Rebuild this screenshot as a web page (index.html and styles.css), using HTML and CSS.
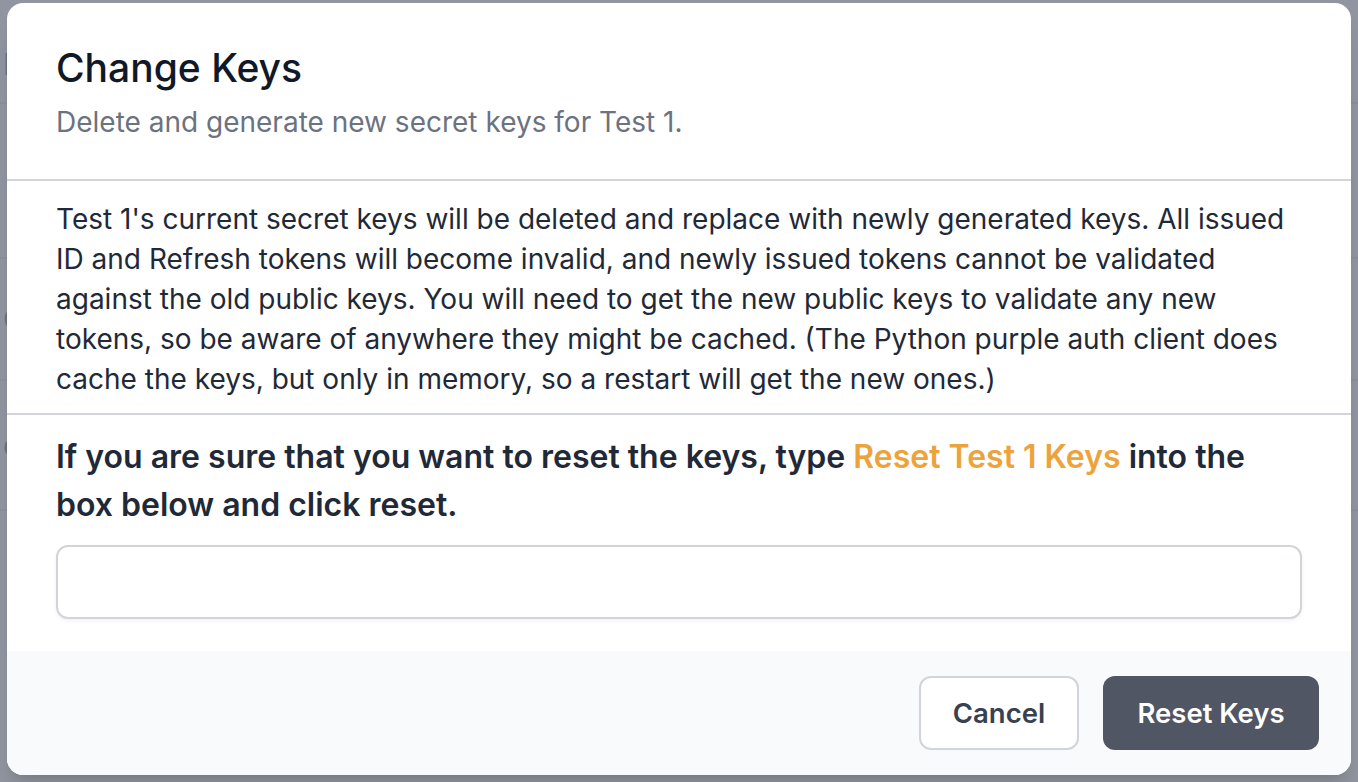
FILE: index.html
```html
<!DOCTYPE html>
<html lang="en">
<head>
<meta charset="utf-8">
<title>Change Keys</title>
<link rel="stylesheet" href="styles.css">
</head>
<body>
<div class="page">
  <div class="bg-row bg-row-1"><span class="bg-letter">F</span></div>
  <div class="bg-row bg-row-2"></div>
  <div class="bg-row bg-row-3"><span class="bg-letter">C</span></div>
  <div class="bg-row bg-row-4"><span class="bg-letter">c</span></div>
</div>
<div class="backdrop">
  <div class="modal" role="dialog">
    <header class="modal-header">
      <h1 class="modal-title">Change Keys</h1>
      <p class="modal-subtitle">Delete and generate new secret keys for Test 1.</p>
    </header>
    <section class="modal-body">
      <p>Test 1's current secret keys will be deleted and replace with newly generated keys. All issued ID and Refresh tokens will become invalid, and newly issued tokens cannot be validated against the old public keys. You will need to get the new public keys to validate any new tokens, so be aware of anywhere they might be cached. (The Python purple auth client does cache the keys, but only in memory, so a restart will get the new ones.)</p>
    </section>
    <section class="modal-confirm">
      <p class="confirm-text">If you are sure that you want to reset the keys, type <span class="highlight">Reset Test 1 Keys</span> into the box below and click reset.</p>
      <input class="confirm-input" type="text" aria-label="Confirmation">
    </section>
    <footer class="modal-footer">
      <button class="btn btn-secondary" type="button">Cancel</button>
      <button class="btn btn-primary" type="button">Reset Keys</button>
    </footer>
  </div>
</div>
</body>
</html>
```

FILE: styles.css
```css
* { box-sizing: border-box; }

html, body {
  margin: 0;
  padding: 0;
  width: 1358px;
  height: 782px;
  overflow: hidden;
  font-family: Inter, "Noto Sans", sans-serif;
}

body {
  position: relative;
  background: #ffffff;
}

.page {
  display: flex;
  flex-direction: column;
  height: 782px;
}

.bg-row {
  border-bottom: 2px solid #e5e7eb;
  display: flex;
  align-items: center;
  padding-left: 3px;
  font-size: 30px;
  color: #6b7280;
}
.bg-row-1 { height: 104px; padding-top: 26px; }
.bg-row-2 { height: 155px; }
.bg-row-3 { height: 122px; }
.bg-row-4 { height: 130px; }
.bg-letter { display: block; }

.backdrop {
  position: absolute;
  inset: 0;
  background: rgba(107, 114, 128, 0.75);
  padding: 3px 7px 7px 7px;
  display: flex;
}

.modal {
  flex: 1;
  background: #ffffff;
  border-radius: 16px;
  overflow: hidden;
  display: flex;
  flex-direction: column;
  box-shadow: 0 20px 25px -5px rgba(0,0,0,0.1), 0 8px 10px -6px rgba(0,0,0,0.1);
}

.modal-header {
  padding: 41px 49px 37px;
  border-bottom: 2px solid #d1d5db;
}

.modal-title {
  margin: 0;
  font-size: 39px;
  line-height: 48px;
  font-weight: 500;
  color: #111827;
}

.modal-subtitle {
  margin: 10px 0 0;
  font-size: 28px;
  line-height: 40px;
  color: #6b7280;
}

.modal-body {
  padding: 18px 49px 14px;
  border-bottom: 2px solid #d1d5db;
}

.modal-body p {
  margin: 0;
  font-size: 28px;
  line-height: 40px;
  color: #1f2937;
}

.modal-confirm {
  padding: 18px 49px 32px;
  display: flex;
  flex-direction: column;
  gap: 16px;
}

.confirm-text {
  margin: 0;
  font-size: 32px;
  line-height: 48px;
  font-weight: 600;
  color: #1f2937;
}

.highlight { color: #eda33b; }

.confirm-input {
  height: 74px;
  width: 100%;
  border: 2px solid #d1d5db;
  border-radius: 12px;
  box-shadow: 0 2px 4px rgba(0,0,0,0.05);
  font: inherit;
  font-size: 28px;
  padding: 0 20px;
  background: #fff;
}

.modal-footer {
  flex: 1;
  background: #f9fafb;
  display: flex;
  justify-content: flex-end;
  align-items: flex-start;
  gap: 24px;
  padding: 25px 32px 0;
}

.btn {
  height: 74px;
  border-radius: 12px;
  font-family: inherit;
  font-size: 27.5px;
  font-weight: 600;
  padding: 0;
  white-space: nowrap;
  cursor: pointer;
}

.btn-secondary {
  width: 160px;
  background: #ffffff;
  border: 2px solid #d1d5db;
  color: #374151;
}

.btn-primary {
  width: 216px;
  background: #505664;
  border: none;
  color: #ffffff;
}
```
